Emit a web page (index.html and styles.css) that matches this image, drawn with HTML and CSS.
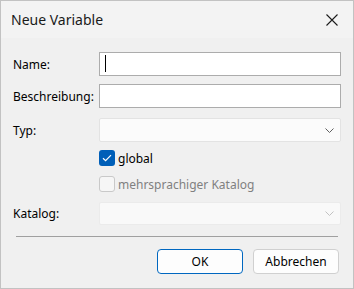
FILE: index.html
```html
<!DOCTYPE html>
<html lang="de">
<head>
<meta charset="utf-8">
<title>Neue Variable</title>
<link rel="stylesheet" href="styles.css">
</head>
<body>
<div class="window">
  <div class="titlebar">
    <span class="title">Neue Variable</span>
    <span class="close">
      <svg width="12" height="12" viewBox="0 0 12 12"><path d="M0.5 0.5 L11.5 11.5 M11.5 0.5 L0.5 11.5" stroke="#1b1b1b" stroke-width="1.1" fill="none"/></svg>
    </span>
  </div>
  <div class="content">
    <div class="row r-name">
      <label class="lbl">Name:</label>
      <div class="input"><span class="caret"></span></div>
    </div>
    <div class="row r-desc">
      <label class="lbl">Beschreibung:</label>
      <div class="input"></div>
    </div>
    <div class="row r-typ">
      <label class="lbl">Typ:</label>
      <div class="select">
        <svg class="chev" width="9" height="5" viewBox="0 0 9 5"><path d="M0.5 0.5 L4.5 4.5 L8.5 0.5" stroke="#5f5f5f" stroke-width="1" fill="none"/></svg>
      </div>
    </div>
    <div class="row r-global">
      <span class="lbl"></span>
      <div class="check-line">
        <span class="box checked">
          <svg width="10" height="8" viewBox="0 0 10 8"><path d="M1 4.2 L3.6 6.6 L9 1.2" stroke="#ffffff" stroke-width="1.2" fill="none"/></svg>
        </span>
        <span class="ctext">global</span>
      </div>
    </div>
    <div class="row r-multi">
      <span class="lbl"></span>
      <div class="check-line">
        <span class="box disabled"></span>
        <span class="ctext gray">mehrsprachiger Katalog</span>
      </div>
    </div>
    <div class="row r-kat">
      <label class="lbl">Katalog:</label>
      <div class="select disabled">
        <svg class="chev" width="9" height="5" viewBox="0 0 9 5"><path d="M0.5 0.5 L4.5 4.5 L8.5 0.5" stroke="#c2c2c2" stroke-width="1" fill="none"/></svg>
      </div>
    </div>
    <div class="sep"></div>
    <div class="buttons">
      <button class="btn primary">OK</button>
      <button class="btn">Abbrechen</button>
    </div>
  </div>
</div>
</body>
</html>
```

FILE: styles.css
```css
html, body {
  margin: 0;
  padding: 0;
  background: #f0f0f0;
}
body {
  font-family: "Segoe UI", "Noto Sans", "Open Sans", sans-serif;
  font-size: 12px;
  color: #000;
}
.window {
  width: 354px;
  height: 289px;
  box-sizing: border-box;
  border: 1px solid #c2c2c2;
  background: #f0f0f0;
  display: flex;
  flex-direction: column;
}
.titlebar {
  height: 37px;
  background: #f3f3f3;
  display: flex;
  align-items: center;
  justify-content: space-between;
  padding: 0 15px 0 10px;
}
.title {
  font-size: 14px;
  color: #1a1a1a;
  margin-top: -1px;
}
.close {
  display: flex;
  width: 12px;
  height: 12px;
}
.content {
  padding: 14px 12px 0 12px;
  display: flex;
  flex-direction: column;
}
.row {
  display: grid;
  grid-template-columns: 86px 1fr;
  align-items: center;
}
.r-desc { margin-top: 8px; }
.r-typ { margin-top: 10px; }
.r-global { margin-top: 8px; }
.r-multi { margin-top: 10px; }
.r-kat { margin-top: 10px; }
.lbl {
  white-space: nowrap;
  font-size: 12px;
}
.input {
  height: 24px;
  box-sizing: border-box;
  border: 1px solid #acacac;
  background: #fff;
  position: relative;
}
.caret {
  position: absolute;
  left: 5px;
  top: 2px;
  width: 1px;
  height: 17px;
  background: #000;
}
.select {
  height: 24px;
  box-sizing: border-box;
  border: 1px solid #e3e3e3;
  border-radius: 2px;
  background: #fbfbfb;
  display: flex;
  align-items: center;
  justify-content: flex-end;
  padding-right: 6px;
}
.select.disabled {
  height: 23px;
  background: #f9f9f9;
  border-color: #ebebeb;
}
.check-line {
  display: flex;
  align-items: center;
  height: 16px;
}
.box {
  width: 16px;
  height: 16px;
  box-sizing: border-box;
  border-radius: 3px;
  display: flex;
  align-items: center;
  justify-content: center;
}
.box.checked {
  background: #005fb8;
}
.box.disabled {
  border: 1px solid #c9c9c9;
  background: #f6f6f6;
}
.ctext {
  margin-left: 3px;
  font-size: 12px;
}
.ctext.gray {
  color: #808080;
}
.sep {
  margin: 11px 3px 0 3px;
  height: 1px;
  background: #a0a0a0;
}
.buttons {
  margin-top: 12px;
  display: flex;
  justify-content: flex-end;
  gap: 10px;
  padding-right: 2px;
}
.btn {
  width: 86px;
  height: 25px;
  box-sizing: border-box;
  border: 1px solid #d0d0d0;
  border-radius: 4px;
  background: #fdfdfd;
  font-family: inherit;
  font-size: 12px;
  color: #000;
  padding: 0;
}
.btn.primary {
  border-color: #0067c0;
}
```
